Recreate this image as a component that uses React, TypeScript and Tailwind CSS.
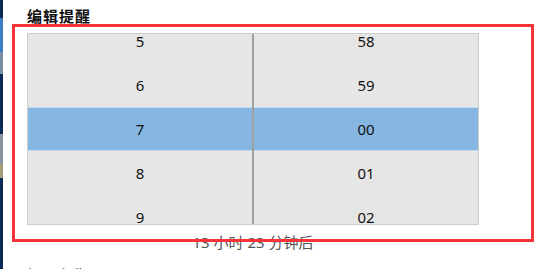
import React from 'react';

const hours = ['5', '6', '7', '8', '9'];
const minutes = ['58', '59', '00', '01', '02'];

const font = { fontFamily: '"Noto Sans", "Noto Sans CJK SC", sans-serif' };

const Column = ({ items, selected, divider }: { items: string[], selected: number, divider?: boolean }) => (
  <div className={`flex-1 overflow-hidden ${divider ? 'border-r-2 border-black/30' : ''}`}>
    <div className="-mt-[15px] flex flex-col">
      {items.map((v, i) => (
        <div
          key={v}
          className={`h-[44px] flex items-center justify-center text-[15px] text-[#111] ${
            i === selected ? 'bg-[#86b7e3] border-y border-[#c4daef]' : ''
          }`}
        >
          {v}
        </div>
      ))}
    </div>
  </div>
);

export default function App() {
  return (
    <div className="relative w-[544px] h-[269px] overflow-hidden bg-white flex" style={font}>
      {/* desktop edge */}
      <div className="w-[3px] h-full flex flex-col bg-[#0b2a56]">
        <div className="h-[18px]" />
        <div className="h-[34px] bg-[#3d7fc4]" />
        <div className="h-[22px] bg-[#7c8ea3]" />
        <div className="h-[60px]" />
        <div className="h-[30px] bg-[#8a94a0]" />
        <div className="h-[14px] bg-[#a59a7a]" />
      </div>

      <div className="flex-1 pl-[24px] pt-[6px]">
        <div className="text-[15px] font-bold leading-[20px] text-[#111] tracking-[1px]">编辑提醒</div>

        {/* time picker */}
        <div className="mt-[7px] w-[452px] h-[192px] border border-[#cdcdcd] bg-[#e6e6e6] flex">
          <Column items={hours} selected={2} divider />
          <Column items={minutes} selected={2} />
        </div>

        <div className="w-[452px] mt-[7px] text-center text-[15px] leading-[20px] text-[#555]">
          13 小时 23 分钟后
        </div>

        <div className="mt-[13px] text-[15px] leading-[20px] text-[#222]">提醒名称</div>
      </div>

      {/* annotation frame */}
      <div className="absolute left-[12px] top-[24px] w-[522px] h-[218px] border-[3px] border-[#f53339] pointer-events-none" />
    </div>
  );
}
